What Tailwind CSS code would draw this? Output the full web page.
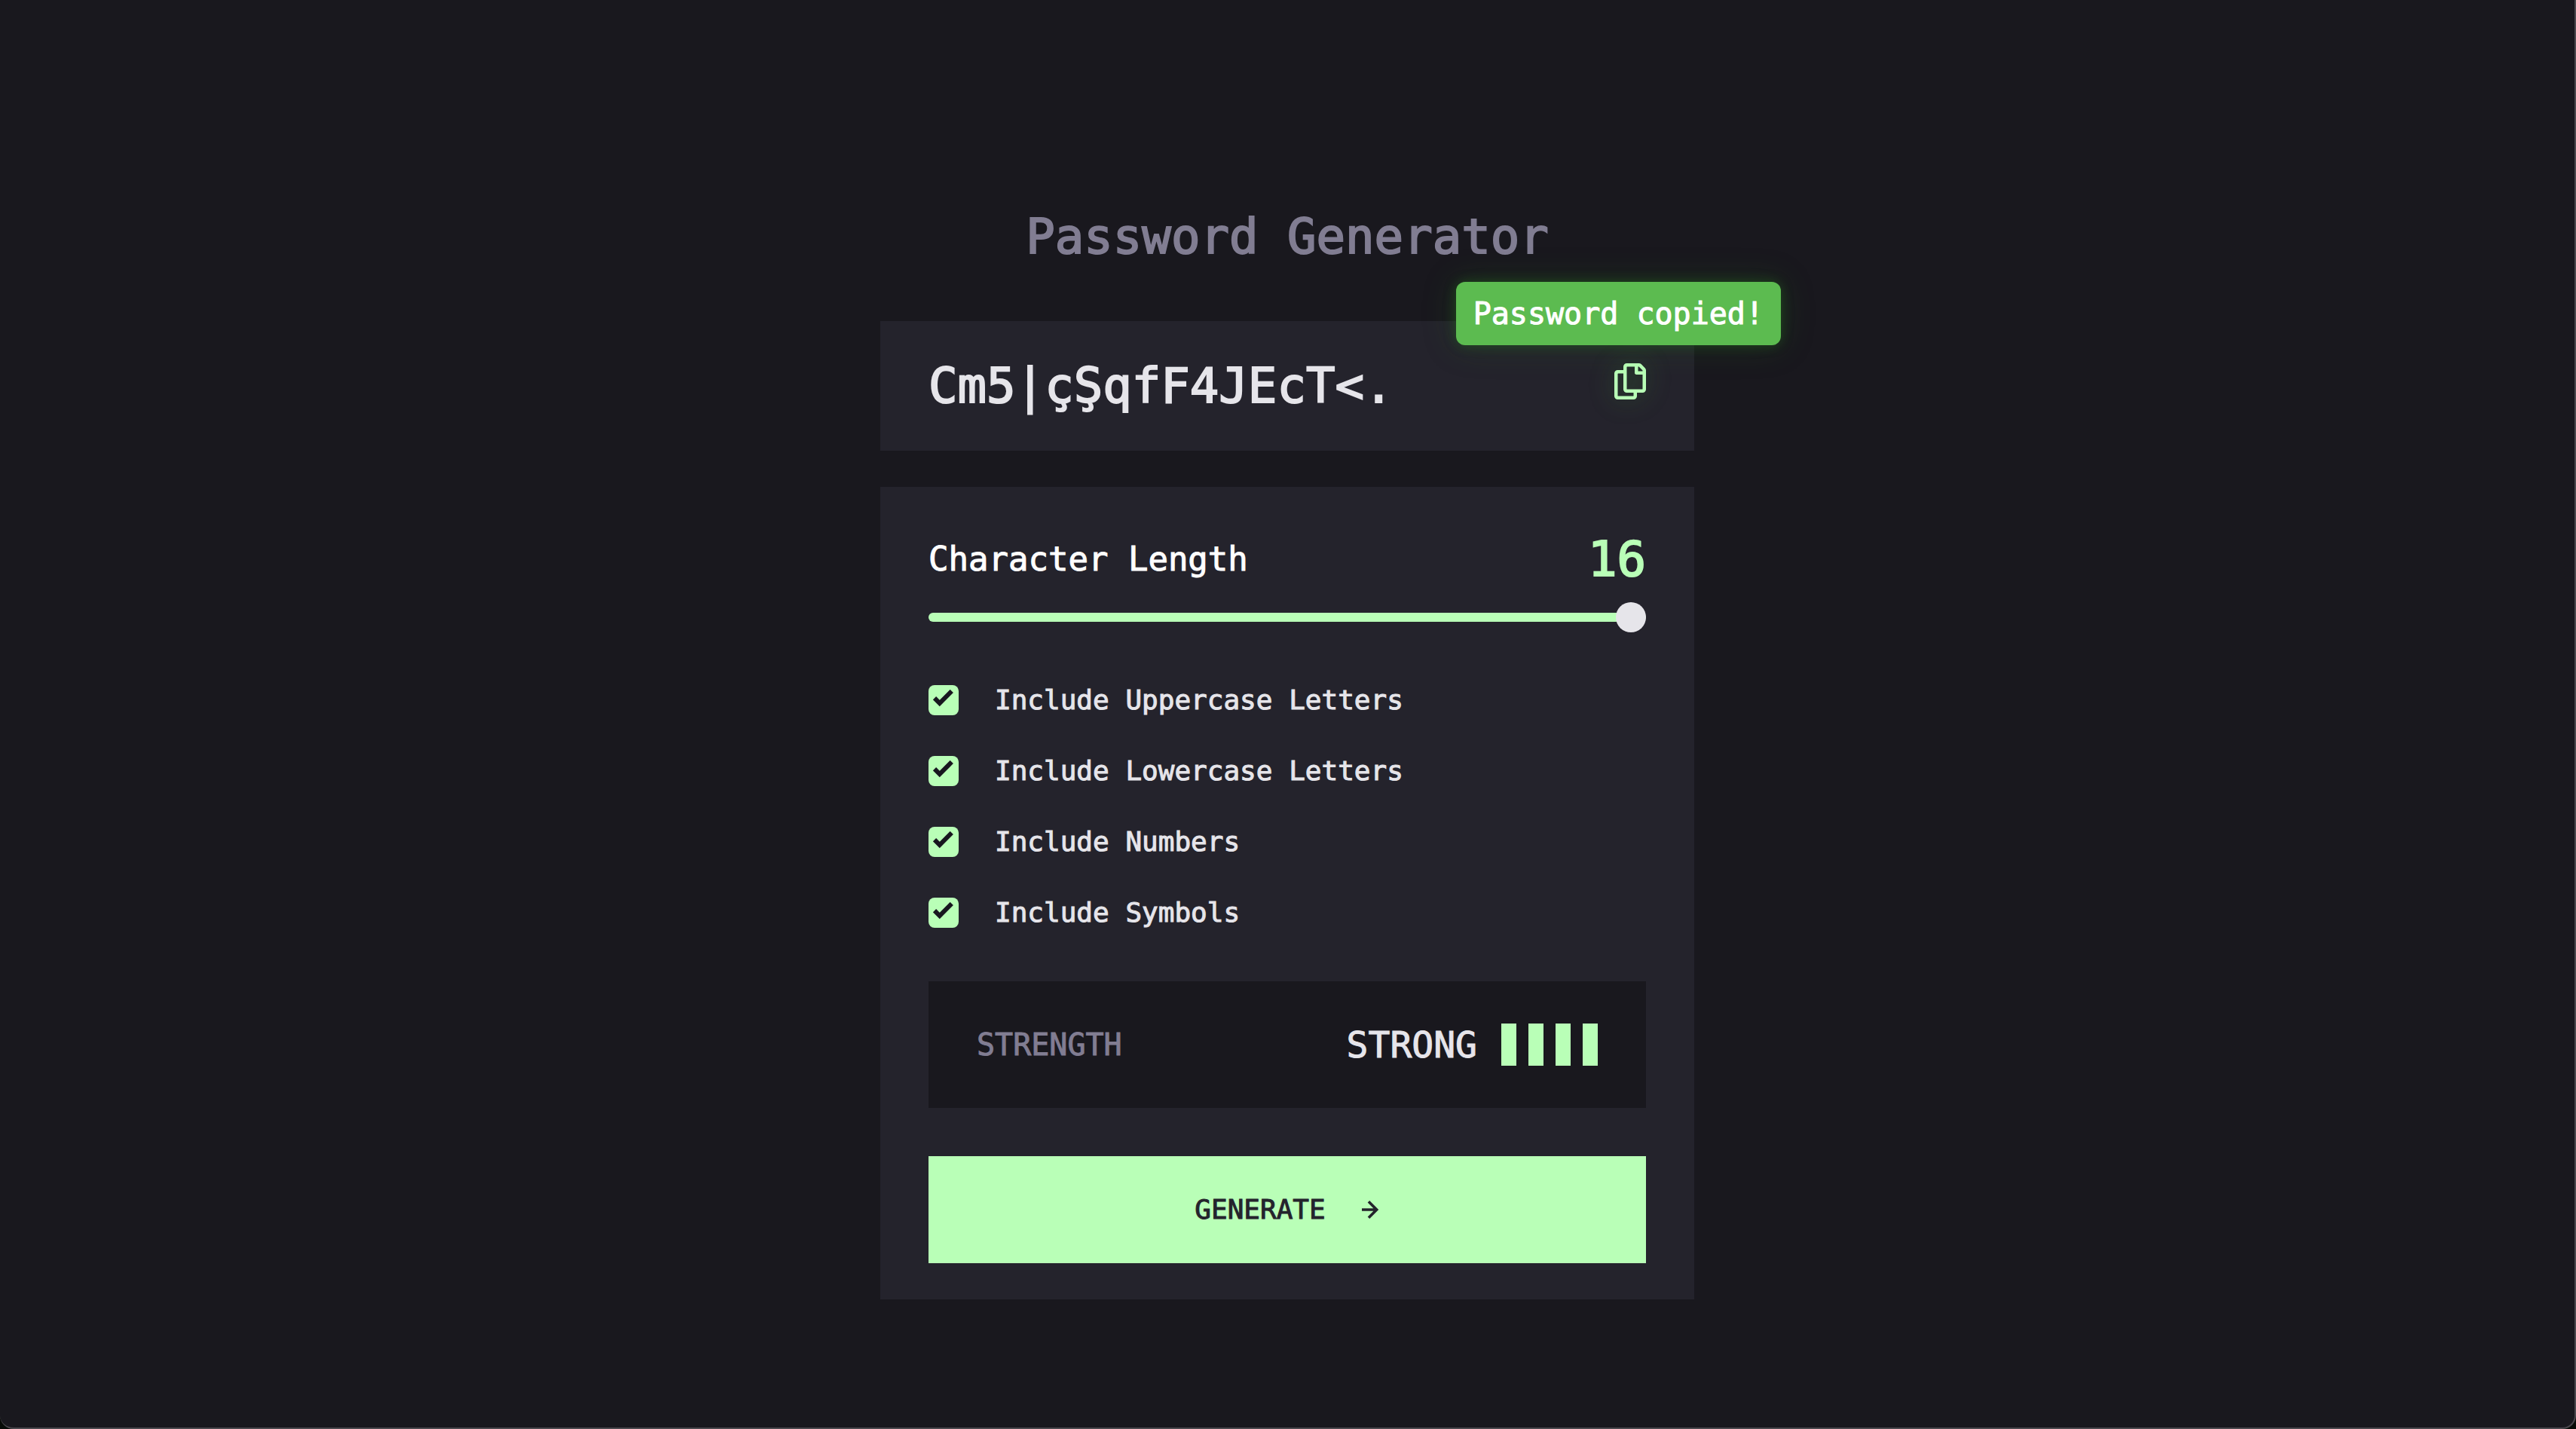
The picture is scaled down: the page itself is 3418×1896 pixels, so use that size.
<!DOCTYPE html>
<html lang="en">
<head>
<meta charset="utf-8">
<meta name="viewport" content="width=device-width, initial-scale=1">
<title>Password Generator</title>
<script src="https://cdn.jsdelivr.net/npm/@tailwindcss/browser@4"></script>
</head>
<body class="bg-[#070b07] font-['DejaVu_Sans_Mono',monospace] text-[#e6e5ea]">
<div class="flex min-h-screen flex-col items-center rounded-b-[18px] border-r-2 border-b-2 border-[#4a484d] bg-[#19181e] pt-[272px] pb-[170px]">
<main class="flex w-full max-w-[1080px] flex-col">
  <h1 class="text-center text-[64px] leading-[84px] font-medium text-[#817d92] [-webkit-text-stroke:2px]">Password Generator</h1>

  <section class="relative mt-[70px] flex h-[172px] items-center justify-between bg-[#24232c] px-16">
    <output class="text-[64px] leading-[84px] [-webkit-text-stroke:2px]">Cm5|çŞqfF4JEcT&lt;.</output>
    <button type="button" aria-label="Copy password" class="mb-3">
      <svg class="h-12 w-[42px] [filter:drop-shadow(0_0_16px_rgba(60,150,50,0.4))]" viewBox="0 0 21 24" fill="#b9ffb7"><path d="M20.341 3.091 17.909.659A2.25 2.25 0 0 0 16.319 0H8.25A2.25 2.25 0 0 0 6 2.25V4.5H2.25A2.25 2.25 0 0 0 0 6.75v15A2.25 2.25 0 0 0 2.25 24h10.5A2.25 2.25 0 0 0 15 21.75V19.5h3.75A2.25 2.25 0 0 0 21 17.25V4.682a2.25 2.25 0 0 0-.659-1.591ZM12.469 21.75H2.53a.281.281 0 0 1-.281-.281V7.03a.281.281 0 0 1 .281-.281H6v10.5a2.25 2.25 0 0 0 2.25 2.25h4.5v1.969a.282.282 0 0 1-.281.281Zm6-4.5H8.53a.281.281 0 0 1-.281-.281V2.53a.281.281 0 0 1 .281-.281H13.5v4.125c0 .621.504 1.125 1.125 1.125h4.125v9.469a.282.282 0 0 1-.281.281Zm.281-12h-3v-3h.451c.075 0 .147.03.2.082L18.667 4.6a.283.283 0 0 1 .083.199v.451Z"/></svg>
    </button>
    <div role="status" class="absolute -top-[52px] -right-[115px] rounded-xl bg-[#5cbb50] px-[23px] text-[40px] leading-[84px] whitespace-nowrap text-white shadow-[0_0_16px_rgba(40,120,30,0.4),0_0_44px_rgba(40,120,30,0.25)] [-webkit-text-stroke:1px]">Password copied!</div>
  </section>

  <form class="mt-12 flex flex-col bg-[#24232c] px-16 pt-[54px] pb-12">
    <div class="flex items-center justify-between">
      <label for="length" class="text-[44px] leading-[84px] text-white [-webkit-text-stroke:1px]">Character Length</label>
      <output for="length" class="text-[64px] leading-[84px] text-[#b9ffb7] [-webkit-text-stroke:2px]">16</output>
    </div>
    <input id="length" type="range" min="0" max="16" value="16" class="mt-[15px] block h-10 w-full appearance-none bg-transparent [&::-webkit-slider-runnable-track]:h-3 [&::-webkit-slider-runnable-track]:rounded-md [&::-webkit-slider-runnable-track]:bg-[#b9ffb7] [&::-webkit-slider-thumb]:-mt-[14px] [&::-webkit-slider-thumb]:size-10 [&::-webkit-slider-thumb]:appearance-none [&::-webkit-slider-thumb]:rounded-full [&::-webkit-slider-thumb]:bg-[#e6e5ea]">
    <div class="mt-[63px] flex flex-col gap-10 text-[36px] leading-[54px] [-webkit-text-stroke:1px]">
      <label class="flex items-center gap-12">
        <span class="grid size-10"><input type="checkbox" checked class="col-start-1 row-start-1 size-10 appearance-none rounded-lg bg-[#b9ffb7]"><svg class="pointer-events-none col-start-1 row-start-1 size-7 place-self-center" viewBox="0 0 14 14" fill="none" stroke="#18171f" stroke-width="3"><path d="M1 5.607 4.393 9l8-8"/></svg></span>
        Include Uppercase Letters
      </label>
      <label class="flex items-center gap-12">
        <span class="grid size-10"><input type="checkbox" checked class="col-start-1 row-start-1 size-10 appearance-none rounded-lg bg-[#b9ffb7]"><svg class="pointer-events-none col-start-1 row-start-1 size-7 place-self-center" viewBox="0 0 14 14" fill="none" stroke="#18171f" stroke-width="3"><path d="M1 5.607 4.393 9l8-8"/></svg></span>
        Include Lowercase Letters
      </label>
      <label class="flex items-center gap-12">
        <span class="grid size-10"><input type="checkbox" checked class="col-start-1 row-start-1 size-10 appearance-none rounded-lg bg-[#b9ffb7]"><svg class="pointer-events-none col-start-1 row-start-1 size-7 place-self-center" viewBox="0 0 14 14" fill="none" stroke="#18171f" stroke-width="3"><path d="M1 5.607 4.393 9l8-8"/></svg></span>
        Include Numbers
      </label>
      <label class="flex items-center gap-12">
        <span class="grid size-10"><input type="checkbox" checked class="col-start-1 row-start-1 size-10 appearance-none rounded-lg bg-[#b9ffb7]"><svg class="pointer-events-none col-start-1 row-start-1 size-7 place-self-center" viewBox="0 0 14 14" fill="none" stroke="#18171f" stroke-width="3"><path d="M1 5.607 4.393 9l8-8"/></svg></span>
        Include Symbols
      </label>
    </div>
    <div class="mt-16 flex h-[168px] items-center justify-between bg-[#19181e] px-16">
      <span class="text-[40px] text-[#817d92] [-webkit-text-stroke:1px]">STRENGTH</span>
      <div class="flex items-center gap-8">
        <span class="text-[48px] [-webkit-text-stroke:1px]">STRONG</span>
        <div class="flex gap-4">
          <i class="h-14 w-5 bg-[#b9ffb7]"></i>
          <i class="h-14 w-5 bg-[#b9ffb7]"></i>
          <i class="h-14 w-5 bg-[#b9ffb7]"></i>
          <i class="h-14 w-5 bg-[#b9ffb7]"></i>
        </div>
      </div>
    </div>
    <button type="button" class="mt-16 flex h-[142px] items-center justify-center gap-12 bg-[#b9ffb7] text-[36px] text-[#24232c] [-webkit-text-stroke:1px]">
      GENERATE
      <svg class="size-6" viewBox="0 0 12 12" fill="#24232c"><path d="m5.106 12 6-6-6-6-1.265 1.265 3.841 3.84H.001v1.79h7.681l-3.841 3.84z"/></svg>
    </button>
  </form>
</main>
</div>
</body>
</html>
